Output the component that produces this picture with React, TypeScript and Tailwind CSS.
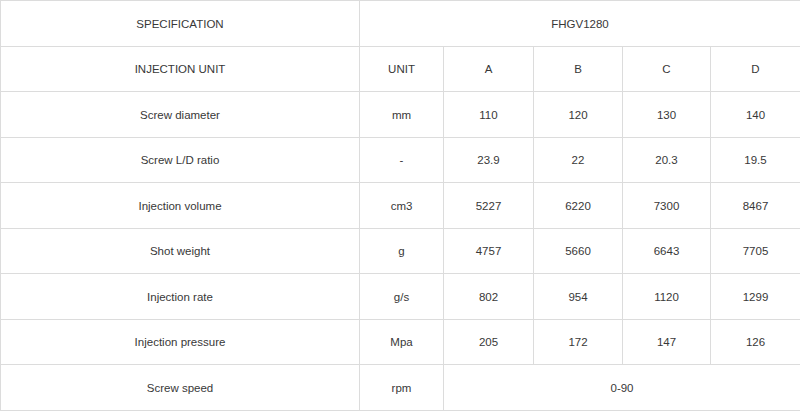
import React from "react";

const rows: { name: string; unit: string; vals: string[] | string }[] = [
  { name: "Screw diameter", unit: "mm", vals: ["110", "120", "130", "140"] },
  { name: "Screw L/D ratio", unit: "-", vals: ["23.9", "22", "20.3", "19.5"] },
  { name: "Injection volume", unit: "cm3", vals: ["5227", "6220", "7300", "8467"] },
  { name: "Shot weight", unit: "g", vals: ["4757", "5660", "6643", "7705"] },
  { name: "Injection rate", unit: "g/s", vals: ["802", "954", "1120", "1299"] },
  { name: "Injection pressure", unit: "Mpa", vals: ["205", "172", "147", "126"] },
  { name: "Screw speed", unit: "rpm", vals: "0-90" },
];

const cell = "border border-[#dcdcdc] text-center align-middle px-0 pt-[2px] pb-0";

const App = () => {
  return (
    <div className="w-[800px] h-[413px] bg-white overflow-hidden">
      <table
        className="border-collapse table-fixed w-[800px] text-[11.5px] text-[#383838]"
        style={{ fontFamily: '"Liberation Sans", Arial, sans-serif' }}
      >
        <colgroup>
          <col className="w-[359px]" />
          <col className="w-[84px]" />
          <col className="w-[90px]" />
          <col className="w-[89px]" />
          <col className="w-[88px]" />
          <col className="w-[90px]" />
        </colgroup>
        <tbody>
          <tr className="h-[45.5px]">
            <td className={cell}>SPECIFICATION</td>
            <td className={cell} colSpan={5}>
              FHGV1280
            </td>
          </tr>
          <tr className="h-[45.5px]">
            <td className={cell}>INJECTION UNIT</td>
            <td className={cell}>UNIT</td>
            <td className={cell}>A</td>
            <td className={cell}>B</td>
            <td className={cell}>C</td>
            <td className={cell}>D</td>
          </tr>
          {rows.map((r) => (
            <tr key={r.name} className="h-[45.5px]">
              <td className={cell}>{r.name}</td>
              <td className={cell}>{r.unit}</td>
              {typeof r.vals === "string" ? (
                <td className={cell} colSpan={4}>
                  {r.vals}
                </td>
              ) : (
                r.vals.map((v, i) => (
                  <td key={i} className={cell}>
                    {v}
                  </td>
                ))
              )}
            </tr>
          ))}
        </tbody>
      </table>
    </div>
  );
};

export default App;
